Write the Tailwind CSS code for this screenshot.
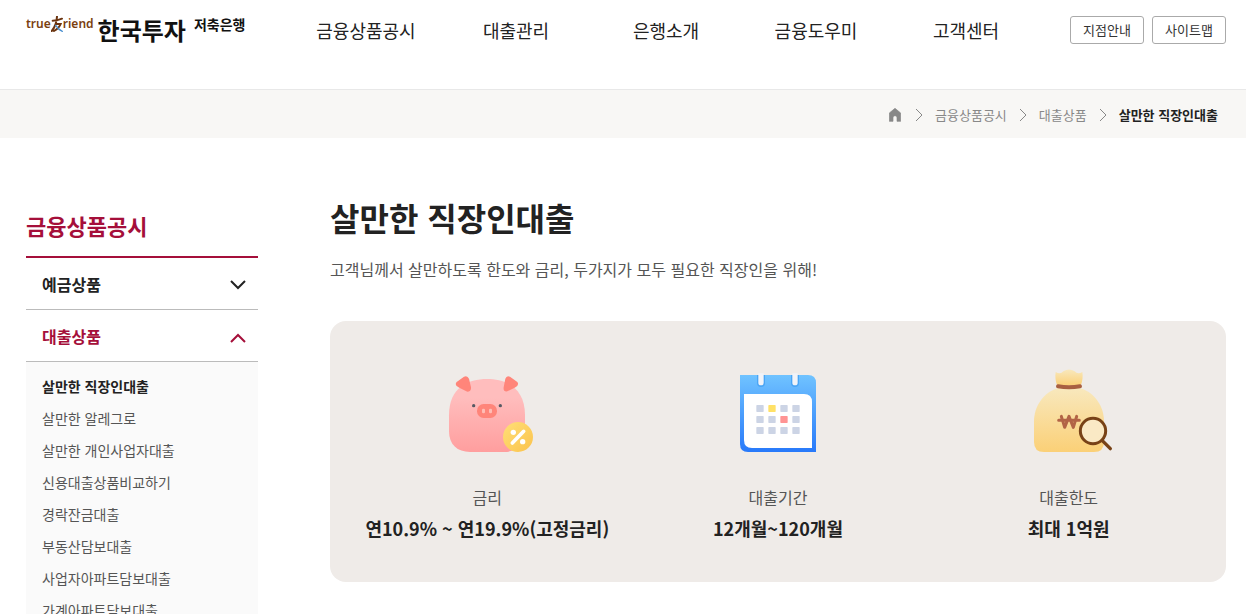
<!DOCTYPE html>
<html lang="ko">
<head>
    <meta charset="UTF-8">
    <meta name="viewport" content="width=device-width, initial-scale=1.0">
    <title>살만한 직장인대출 - 한국투자저축은행</title>
    <script src="https://cdn.jsdelivr.net/npm/@tailwindcss/browser@4"></script>
</head>
<body class="bg-white text-[#222] font-['Noto_Sans_CJK_KR',sans-serif]">
    <!-- Header -->
    <header class="flex items-start h-[90px] pl-[26px] pr-5 border-b border-[#e8e8e8]">
        <a href="#" class="flex items-start w-[265px] shrink-0 pt-3 whitespace-nowrap" aria-label="한국투자저축은행">
            <span class="flex items-center pt-1 text-xs leading-4 font-semibold text-[#7a4010] font-['Noto_Sans',sans-serif]">
                true
                <svg class="w-3 h-4" viewBox="0 0 36 48" fill="none" stroke-linecap="round">
                    <path d="M5 14C14 14 24 12 33 8M18 2C17 18 12 34 2 45M14 24H29C26 32 18 40 9 45" stroke="#6b3410" stroke-width="6" />
                    <path d="M14 28C19 36 25 42 34 46" stroke="#4a90d0" stroke-width="4" />
                </svg>
                riend
            </span>
            <span class="pl-1 pt-[2px] text-2xl leading-8 font-bold text-[#111]">한국투자</span>
            <span class="pl-2 text-sm leading-6 font-bold text-[#111]">저축은행</span>
        </a>
        <nav class="grid grid-cols-5 w-[750px] pt-4 text-lg leading-7 text-center">
            <a href="#">금융상품공시</a>
            <a href="#">대출관리</a>
            <a href="#">은행소개</a>
            <a href="#">금융도우미</a>
            <a href="#">고객센터</a>
        </nav>
        <div class="flex gap-2 ml-auto pt-4 text-[13px]">
            <button type="button" class="w-[74px] h-7 border border-[#aaa] rounded-[3px] text-[#333]">지점안내</button>
            <button type="button" class="w-[74px] h-7 border border-[#aaa] rounded-[3px] text-[#333]">사이트맵</button>
        </div>
    </header>

    <!-- Breadcrumb -->
    <nav class="flex items-center justify-end h-12 pr-7 pt-[2px] bg-[#f8f7f5] text-[13px] leading-5 text-[#888]" aria-label="현재 위치">
        <a href="#" aria-label="홈">
            <svg class="w-3 h-[14px]" viewBox="0 0 36 42" fill="#888"><path d="M18 1 35 15V40H24V29A6 6 0 0 0 12 29V40H1V15Z" stroke="#888" stroke-width="2" stroke-linejoin="round" /></svg>
        </a>
        <svg class="w-2 h-[14px] ml-[14px] mr-3" viewBox="0 0 8 14" fill="none" stroke="#888"><path d="m1 1 6 6-6 6" /></svg>
        <a href="#">금융상품공시</a>
        <svg class="w-2 h-[14px] mx-3" viewBox="0 0 8 14" fill="none" stroke="#888"><path d="m1 1 6 6-6 6" /></svg>
        <a href="#">대출상품</a>
        <svg class="w-2 h-[14px] mx-3" viewBox="0 0 8 14" fill="none" stroke="#888"><path d="m1 1 6 6-6 6" /></svg>
        <span class="font-bold text-[#222]">살만한 직장인대출</span>
    </nav>

    <div class="flex gap-[72px] pl-[26px] pr-5">
        <!-- Sidebar -->
        <aside class="w-[232px] shrink-0 pt-[72px]">
            <h2 class="h-12 border-b-2 border-[#a50f3a] text-[22px] leading-[30px] font-bold text-[#a50f3a]">금융상품공시</h2>
            <button type="button" class="flex items-center justify-between w-full h-[52px] pl-4 pr-3 border-b border-[#bbb] font-bold" aria-expanded="false">
                예금상품
                <svg class="w-4 h-4" viewBox="0 0 16 16" fill="none" stroke="currentColor" stroke-width="2"><path d="m1 5 7 7 7-7" /></svg>
            </button>
            <button type="button" class="flex items-center justify-between w-full h-[52px] pl-4 pr-3 border-b border-[#bbb] font-bold text-[#a50f3a]" aria-expanded="true">
                대출상품
                <svg class="w-4 h-4" viewBox="0 0 16 16" fill="none" stroke="currentColor" stroke-width="2"><path d="m1 14 7-7 7 7" /></svg>
            </button>
            <ul class="px-4 pt-2 bg-[#fafafa] text-sm leading-8 text-[#555]">
                <li><a href="#" class="font-bold text-[#222]">살만한 직장인대출</a></li>
                <li><a href="#">살만한 알레그로</a></li>
                <li><a href="#">살만한 개인사업자대출</a></li>
                <li><a href="#">신용대출상품비교하기</a></li>
                <li><a href="#">경락잔금대출</a></li>
                <li><a href="#">부동산담보대출</a></li>
                <li><a href="#">사업자아파트담보대출</a></li>
                <li><a href="#">가계아파트담보대출</a></li>
            </ul>
        </aside>

        <!-- Main Content -->
        <main class="flex-1 pt-[55px]">
            <h1 class="text-[32px] leading-12 font-bold">살만한 직장인대출</h1>
            <p class="pt-4 leading-6 text-[#555]">고객님께서 살만하도록 한도와 금리, 두가지가 모두 필요한 직장인을 위해!</p>

            <section class="grid grid-cols-3 mt-10 px-3 pt-10 pb-[39px] rounded-2xl bg-[#efebe8] text-center">
                <div>
                    <svg class="w-[100px] h-[100px] mx-auto" viewBox="21 3 300 300">
                        <defs>
                            <linearGradient id="pig" x2="0" y2="1"><stop offset=".25" stop-color="#ffbdbd" /><stop offset="1" stop-color="#ff9e9e" /></linearGradient>
                            <linearGradient id="coin" x2="1" y2="1"><stop stop-color="#ffdf78" /><stop offset="1" stop-color="#fbc34c" /></linearGradient>
                        </defs>
                        <path d="M171 57C228 57 285 82 285 166V214C285 254 260 276 222 276H120C82 276 57 254 57 214V166C57 82 114 57 171 57Z" fill="url(#pig)" />
                        <path d="M80 66 102 50Q112 45 117 56L123 82Q124 95 112 95L88 83Q72 76 80 66ZM262 66 240 50Q230 45 226 56L221 82Q219 96 232 94L254 83Q269 76 262 66Z" fill="#ff857a" />
                        <circle cx="131" cy="137" r="5" fill="#555963" />
                        <circle cx="211" cy="137" r="5" fill="#555963" />
                        <rect x="141" y="132" width="60" height="42" rx="20" fill="#ff857a" />
                        <rect x="156" y="146" width="9" height="14" rx="4" fill="#ffbdb5" />
                        <rect x="177" y="146" width="9" height="14" rx="4" fill="#ffbdb5" />
                        <circle cx="264" cy="231" r="45" fill="url(#coin)" />
                        <path d="m247 249 34-35" stroke="#fff" stroke-width="11" stroke-linecap="round" />
                        <circle cx="250" cy="217" r="8" fill="#fff" />
                        <circle cx="278" cy="245" r="8" fill="#fff" />
                    </svg>
                    <p class="pt-6 leading-6 text-[#555]">금리</p>
                    <p class="pt-1 text-lg leading-[30px] font-bold">연10.9% ~ 연19.9%(고정금리)</p>
                </div>
                <div>
                    <svg class="w-[100px] h-[100px] mx-auto" viewBox="24 3 300 300">
                        <defs>
                            <linearGradient id="cal" x2="0" y2="1"><stop stop-color="#70c3ff" /><stop offset="1" stop-color="#2879fa" /></linearGradient>
                        </defs>
                        <path d="M60 45H264Q288 45 288 69V276H84Q60 276 60 252Z" fill="url(#cal)" />
                        <path d="M72 102H252Q276 102 276 126V264H96Q72 264 72 240Z" fill="#fff" />
                        <path d="M111 45V69a12 12 0 0 0 24 0V45ZM213 45V69a12 12 0 0 0 24 0V45Z" fill="#4aa5f5" />
                        <path d="M115 40H131V68a8 8 0 0 1-16 0ZM217 40H233V68a8 8 0 0 1-16 0Z" fill="#f1f3f8" />
                        <g fill="#ccd4e5">
                            <rect x="109" y="135" width="22" height="21" rx="2" />
                            <rect x="145" y="135" width="22" height="21" rx="2" fill="#ffe166" />
                            <rect x="181" y="135" width="22" height="21" rx="2" />
                            <rect x="217" y="135" width="22" height="21" rx="2" />
                            <rect x="109" y="168" width="22" height="21" rx="2" />
                            <rect x="145" y="168" width="22" height="21" rx="2" />
                            <rect x="181" y="168" width="22" height="21" rx="2" fill="#ff9494" />
                            <rect x="217" y="168" width="22" height="21" rx="2" />
                            <rect x="109" y="201" width="22" height="21" rx="2" />
                            <rect x="145" y="201" width="22" height="21" rx="2" />
                            <rect x="181" y="201" width="22" height="21" rx="2" />
                            <rect x="217" y="201" width="22" height="21" rx="2" />
                        </g>
                    </svg>
                    <p class="pt-6 leading-6 text-[#555]">대출기간</p>
                    <p class="pt-1 text-lg leading-[30px] font-bold">12개월~120개월</p>
                </div>
                <div>
                    <svg class="w-[100px] h-[100px] mx-auto" viewBox="27 3 300 300">
                        <defs>
                            <linearGradient id="bag" x2="0" y2="1"><stop stop-color="#f8e8bd" /><stop offset="1" stop-color="#fbd077" /></linearGradient>
                        </defs>
                        <path d="M144 84H210C255 98 282 140 282 184V246Q282 276 252 276H102Q72 276 72 246V184C72 140 99 98 144 84Z" fill="url(#bag)" />
                        <path d="M142 77C136 63 135 49 137 36Q151 44 160 34Q177 23 194 34Q203 44 217 36C219 49 218 63 212 77Z" fill="url(#bag)" />
                        <path d="M144 79Q177 85 210 79" fill="none" stroke="#a85f41" stroke-width="12" stroke-linecap="round" />
                        <path d="M154 169 164 202 177 169 190 202 200 169M146 181H208" fill="none" stroke="#b26446" stroke-width="9" stroke-linecap="round" stroke-linejoin="round" />
                        <circle cx="249" cy="213" r="38" fill="#fae9c5" stroke="#784217" stroke-width="9" />
                        <path d="m277 242 24 24" stroke="#784217" stroke-width="10" stroke-linecap="round" />
                    </svg>
                    <p class="pt-6 leading-6 text-[#555]">대출한도</p>
                    <p class="pt-1 text-lg leading-[30px] font-bold">최대 1억원</p>
                </div>
            </section>
        </main>
    </div>
</body>
</html>
